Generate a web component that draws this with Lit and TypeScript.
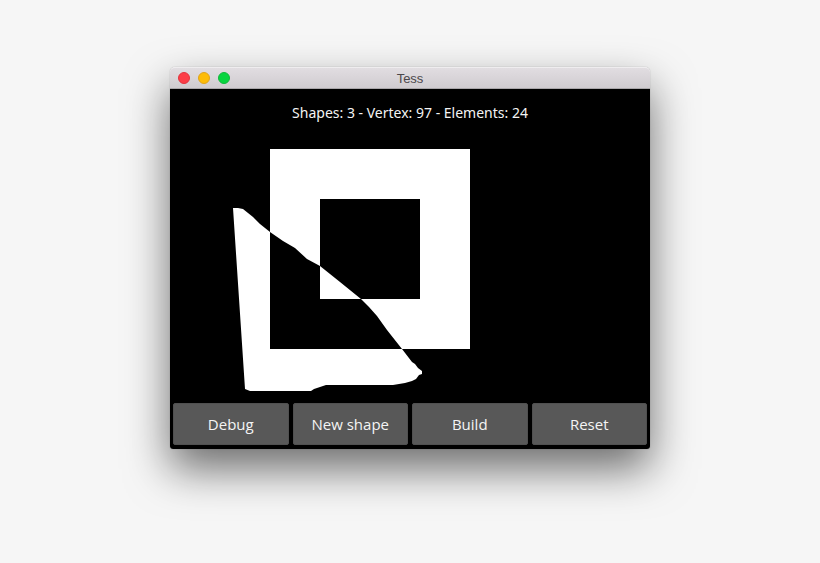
import { LitElement, html, css } from "lit";
import { customElement, property } from "lit/decorators.js";

const SHAPES = [
  "M270 149H470V349H270Z",
  "M320 199H420V299H320Z",
  "M233 208H238L243 209L248 213L253 217L260 224L270 232L283 241L295 248L307 259L320 266L340 282L361 299L369 307L377 316L387 330L402 349L412 362L415 364L418 368L422 371V374L419 375L416 379L412 381L405 383L393 385H326L320 387L314 389L311 391H250L245 389Z",
];

@customElement("tess-canvas")
export class TessCanvas extends LitElement {
  static styles = css`
    :host { display: block; }
    .shapes { display: block; width: 100%; height: auto; fill: #fff; fill-rule: evenodd; }
  `;
  render() {
    return html`<svg class="shapes" viewBox="170 137 480 263" role="img" aria-label="Tessellated shapes">
      <path d=${SHAPES.join("")}></path>
    </svg>`;
  }
}

@customElement("app-root")
export class AppRoot extends LitElement {
  @property({ type: Number }) shapes = 3;
  @property({ type: Number }) vertices = 97;
  @property({ type: Number }) elements = 24;

  static styles = css`
    :host {
      display: block;
      box-sizing: border-box;
      min-height: 100vh;
      padding: 67px 20px 40px;
      background: #f6f6f6;
      overflow: hidden;
    }
    .window {
      max-width: 480px;
      margin: 0 auto;
      border-radius: 5px 5px 3px 3px;
      box-shadow: 0 0 1px rgba(0, 0, 0, 0.4), 0 20px 44px rgba(0, 0, 0, 0.56);
    }
    .titlebar {
      display: grid;
      grid-template-columns: 1fr auto 1fr;
      align-items: start;
      box-sizing: border-box;
      height: 22px;
      padding: 0 8px;
      border-top: 1px solid #efedef;
      border-bottom: 1px solid #aaa7aa;
      border-radius: 5px 5px 0 0;
      background: linear-gradient(#e1dde1, #d0ccd0);
    }
    .lights { display: flex; gap: 8px; padding-top: 4px; }
    .light {
      box-sizing: border-box;
      width: 12px;
      height: 12px;
      padding: 0;
      border: 1px solid;
      border-radius: 50%;
    }
    .close { background: #fc3d47; border-color: #e2343f; }
    .minimize { background: #fdbc08; border-color: #e0a41c; }
    .zoom { background: #08d540; border-color: #12b83c; }
    .title {
      margin: 0;
      font: 400 13px/22px "Liberation Sans", Arial, sans-serif;
      color: #4b474b;
    }
    .content {
      border-radius: 0 0 3px 3px;
      background: #000;
    }
    .stats {
      margin: 0;
      color: #f4f4f4;
      text-align: center;
      font: 14px/48px "Noto Sans", "Open Sans", sans-serif;
    }
    .actions {
      display: grid;
      grid-template-columns: repeat(4, 1fr);
      gap: 4px;
      padding: 3px 3px 4px;
    }
    .action {
      height: 42px;
      padding: 0;
      border: 1px solid #505050;
      border-radius: 2px;
      background: #585858;
      color: #f4f4f4;
      font: 15px/20px "Open Sans", "Noto Sans", sans-serif;
    }
  `;

  render() {
    return html`<main class="window">
      <header class="titlebar">
        <div class="lights">
          <button class="light close" aria-label="Close"></button>
          <button class="light minimize" aria-label="Minimize"></button>
          <button class="light zoom" aria-label="Zoom"></button>
        </div>
        <h1 class="title">Tess</h1>
      </header>
      <section class="content">
        <p class="stats">Shapes: ${this.shapes} - Vertex: ${this.vertices} - Elements: ${this.elements}</p>
        <tess-canvas></tess-canvas>
        <div class="actions">
          ${["Debug", "New shape", "Build", "Reset"].map(
            (label) => html`<button class="action">${label}</button>`
          )}
        </div>
      </section>
    </main>`;
  }
}
